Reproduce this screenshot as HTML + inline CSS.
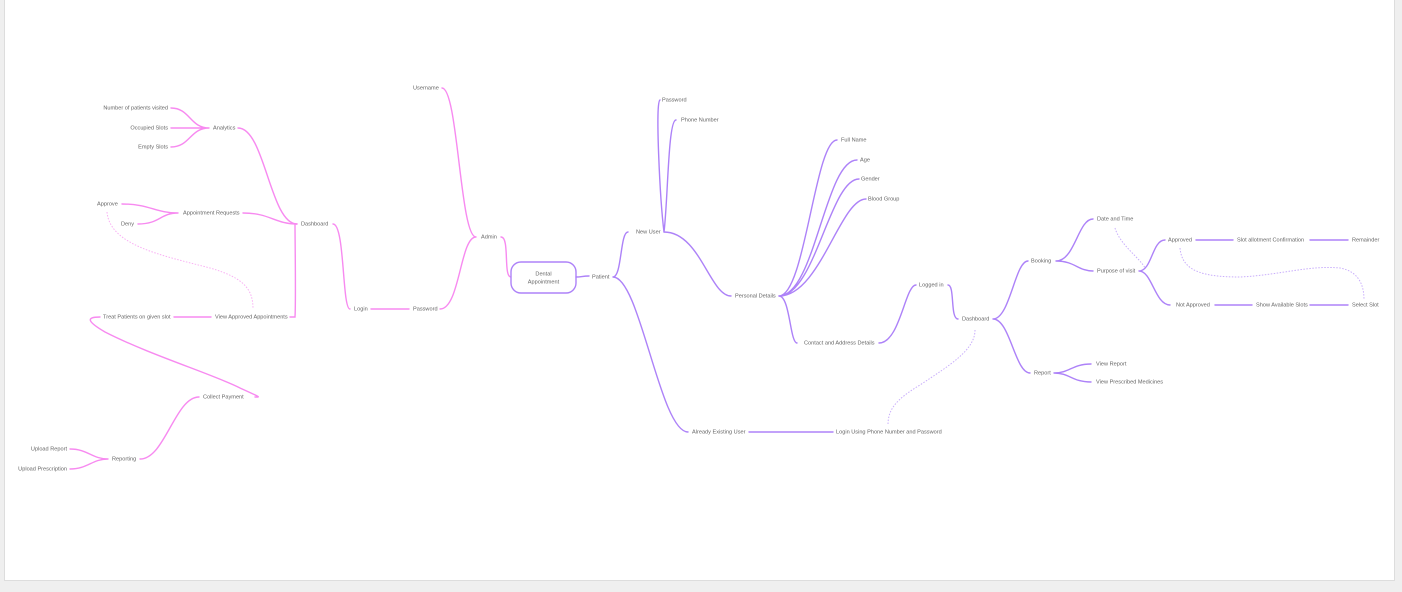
<!DOCTYPE html>
<html><head><meta charset="utf-8"><style>
html,body{margin:0;padding:0;background:#efefef;width:1402px;height:592px;overflow:hidden}
.pg{position:absolute;left:4px;top:0;width:1389px;height:580px;background:#fff;border:1px solid #ddd;border-top:none}
svg{position:absolute;left:0;top:0}
text{font-family:"Liberation Sans",sans-serif;font-size:5.6px;fill:#666;dominant-baseline:middle}
.p{fill:none;stroke:#f78af0;stroke-width:1.4;stroke-linecap:round}
.v{fill:none;stroke:#ad82f8;stroke-width:1.4;stroke-linecap:round}
.pd{fill:none;stroke:#f9b0f4;stroke-width:1;stroke-dasharray:1.5 1.5}
.vd{fill:none;stroke:#c9aefb;stroke-width:1;stroke-dasharray:1.5 1.5}
</style></head><body>
<div class="pg"></div>
<svg width="1402" height="592" viewBox="0 0 1402 592">
<!-- pink -->
<path class="p" d="M171 108 C190 108,190 128,209 128 M171 128 L209 128 M171 147 C190 147,190 128,209 128"/>
<path class="p" d="M238 128 C265 128,270 224,297 224"/>
<path class="p" d="M122 204 C150 204,155 213,178 213 M138 224 C160 224,160 213,178 213 M243 213 C270 213,275 224,297 224"/>
<path class="p" d="M290 317 L295 317 C296 300,295 240,295 224"/>
<path class="p" d="M174 317 L211 317"/>
<path class="pd" d="M107 212 C110 245,160 255,210 268 C245 278,253 290,253 309"/>
<path class="p" d="M100 317 C85 317,88 322,105 332 C150 355,215 375,240 388 C262 398,260 397,255 397"/>
<path class="p" d="M199 397 C175 397,165 459,140 459"/>
<path class="p" d="M70 449 C88 449,92 459,108 459 M70 469 C88 469,92 459,108 459"/>
<path class="p" d="M333 224 C345 224,342 309,350 309 M371 309 L409 309"/>
<path class="p" d="M440 309 C460 309,460 237,476 237 M442 88 C458 88,460 237,476 237"/>
<path class="p" d="M501 237 C510 237,503 277,511 277"/>
<rect x="511" y="262" width="65" height="31" rx="10" fill="#fff" stroke="#ad82f8" stroke-width="1.4"/>
<text x="543.5" y="274" text-anchor="middle">Dental</text>
<text x="543.5" y="282" text-anchor="middle">Appointment</text>
<!-- purple -->
<path class="v" d="M576 277 C582 277,582 276,589 276"/>
<path class="v" d="M613 277 C622 277,620 232,628 232 M613 277 C640 277,660 432,688 432"/>
<path class="v" d="M664 232 C660 200,655 100,660 100 M664 232 C668 200,668 120,676 120"/>
<path class="v" d="M664 232 C700 232,710 296,731 296"/>
<path class="v" d="M779 296 C805 296,815 140,837 140 M779 296 C815 296,825 160,857 160 M779 296 C815 296,830 179,859 179 M779 296 C820 296,840 199,866 199"/>
<path class="v" d="M779 296 C790 296,790 343,797 343"/>
<path class="v" d="M879 343 C900 343,905 285,916 285 M948 285 C955 285,950 319,958 319"/>
<path class="vd" d="M975 330 C975 350,950 365,920 385 C895 400,888 410,888 425"/>
<path class="v" d="M749 432 L833 432"/>
<path class="v" d="M993 319 C1010 319,1015 261,1028 261 M993 319 C1010 319,1015 373,1030 373"/>
<path class="v" d="M1056 261 C1075 261,1078 219,1093 219 M1056 261 C1075 261,1078 271,1093 271"/>
<path class="vd" d="M1115 228 C1120 245,1140 258,1145 268"/>
<path class="v" d="M1139 271 C1152 271,1152 240,1165 240 M1139 271 C1152 271,1155 305,1170 305"/>
<path class="v" d="M1196 240 L1233 240 M1310 240 L1348 240 M1215 305 L1252 305 M1310 305 L1348 305"/>
<path class="vd" d="M1180 248 C1182 270,1200 277,1240 277 C1280 275,1310 265,1340 268 C1362 272,1364 290,1364 300"/>
<path class="v" d="M1054 373 C1070 373,1072 364,1091 364 M1054 373 C1070 373,1072 382,1091 382"/>
<!-- labels pink -->
<g text-anchor="end">
<text x="168" y="108">Number of patients visited</text>
<text x="168" y="128">Occupied Slots</text>
<text x="168" y="147">Empty Slots</text>
<text x="67" y="449">Upload Report</text>
<text x="67" y="469">Upload Prescription</text>
</g>
<text x="213" y="128">Analytics</text>
<text x="97" y="204">Approve</text>
<text x="121" y="224">Deny</text>
<text x="183" y="213">Appointment Requests</text>
<text x="301" y="224">Dashboard</text>
<text x="215" y="317">View Approved Appointments</text>
<text x="103" y="317">Treat Patients on given slot</text>
<text x="203" y="397">Collect Payment</text>
<text x="112" y="459">Reporting</text>
<text x="354" y="309">Login</text>
<text x="413" y="309">Password</text>
<text x="413" y="88">Username</text>
<text x="481" y="237">Admin</text>
<!-- labels purple -->
<text x="592" y="277">Patient</text>
<text x="636" y="232">New User</text>
<text x="692" y="432">Already Existing User</text>
<text x="662" y="100">Password</text>
<text x="681" y="120">Phone Number</text>
<text x="735" y="296">Personal Details</text>
<text x="841" y="140">Full Name</text>
<text x="860" y="160">Age</text>
<text x="861" y="179">Gender</text>
<text x="868" y="199">Blood Group</text>
<text x="804" y="343">Contact and Address Details</text>
<text x="919" y="285">Logged in</text>
<text x="962" y="319">Dashboard</text>
<text x="836" y="432">Login Using Phone Number and Password</text>
<text x="1031" y="261">Booking</text>
<text x="1034" y="373">Report</text>
<text x="1097" y="219">Date and Time</text>
<text x="1097" y="271">Purpose of visit</text>
<text x="1168" y="240">Approved</text>
<text x="1176" y="305">Not Approved</text>
<text x="1237" y="240">Slot allotment Confirmation</text>
<text x="1352" y="240">Remainder</text>
<text x="1256" y="305">Show Available Slots</text>
<text x="1352" y="305">Select Slot</text>
<text x="1096" y="364">View Report</text>
<text x="1096" y="382">View Prescribed Medicines</text>
</svg>
</body></html>
